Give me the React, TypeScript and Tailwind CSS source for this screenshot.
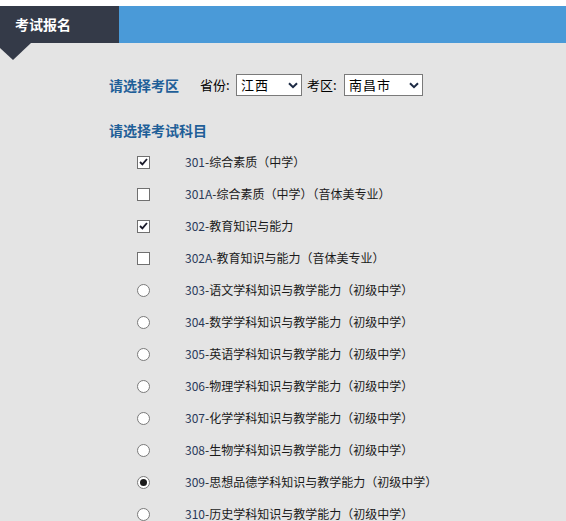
import React from "react"

type Subject = { code: string; name: string; kind: "check" | "radio"; checked?: boolean }

const subjects: Subject[] = [
    { code: "301", name: "综合素质（中学）", kind: "check", checked: true },
    { code: "301A", name: "综合素质（中学）（音体美专业）", kind: "check" },
    { code: "302", name: "教育知识与能力", kind: "check", checked: true },
    { code: "302A", name: "教育知识与能力（音体美专业）", kind: "check" },
    { code: "303", name: "语文学科知识与教学能力（初级中学）", kind: "radio" },
    { code: "304", name: "数学学科知识与教学能力（初级中学）", kind: "radio" },
    { code: "305", name: "英语学科知识与教学能力（初级中学）", kind: "radio" },
    { code: "306", name: "物理学科知识与教学能力（初级中学）", kind: "radio" },
    { code: "307", name: "化学学科知识与教学能力（初级中学）", kind: "radio" },
    { code: "308", name: "生物学科知识与教学能力（初级中学）", kind: "radio" },
    { code: "309", name: "思想品德学科知识与教学能力（初级中学）", kind: "radio", checked: true },
    { code: "310", name: "历史学科知识与教学能力（初级中学）", kind: "radio" },
]

const Chevron = () => (
    <svg width="10" height="7" viewBox="0 0 10 7" className="shrink-0">
        <path d="M1 1.2 L5 5.2 L9 1.2" fill="none" stroke="#1c2a44" strokeWidth="2" />
    </svg>
)

const FakeSelect = ({ value, width }: { value: string; width: string }) => (
    <div className={`flex h-[22px] items-center justify-between border border-[#7a7a7a] bg-white pl-[4px] pr-[3px] text-[13px] text-black ${width}`}>
        <span className="tracking-[1px]">{value}</span>
        <Chevron />
    </div>
)

const Box = ({ checked }: { checked?: boolean }) => (
    <div className="flex h-[13px] w-[13px] items-center justify-center border border-[#707070] bg-white">
        {checked && (
            <svg width="9" height="8" viewBox="0 0 9 8">
                <path d="M1 4 L3.4 6.4 L8 1" fill="none" stroke="#1a1a2a" strokeWidth="1.8" />
            </svg>
        )}
    </div>
)

const Radio = ({ checked }: { checked?: boolean }) => (
    <div className="flex h-[13px] w-[13px] items-center justify-center rounded-full border border-[#7a7a7a] bg-white">
        {checked && <div className="h-[7px] w-[7px] rounded-full bg-[#1a1a1a]" />}
    </div>
)

export default function App() {
    return (
        <div className="h-[521px] w-[566px] overflow-hidden bg-white pt-[6px] font-['Noto_Sans_CJK_SC','Liberation_Sans',sans-serif]">
            <div className="flex h-[37px]">
                <div className="flex w-[119px] items-center bg-[#343a48] pl-[15px] text-[14px] font-bold text-white">
                    考试报名
                </div>
                <div className="flex-1 bg-[#4a9ad8]" />
            </div>
            <div className="relative h-[478px] bg-[#e4e4e4] pl-[109px] pt-[31px]">
                <svg width="32" height="17" viewBox="0 0 32 17" className="absolute left-0 top-0">
                    <polygon points="0,0 31,0 13,17 0,5" fill="#343a48" />
                </svg>
                <div className="flex h-[22px] items-center">
                    <span className="w-[91px] text-[14px] font-bold text-[#1f5f98]">请选择考区</span>
                    <span className="mr-[6px] w-[30px] text-[13px] text-black">省份:</span>
                    <FakeSelect value="江西" width="w-[66px]" />
                    <span className="ml-[5px] mr-[7px] w-[30px] text-[13px] text-black">考区:</span>
                    <FakeSelect value="南昌市" width="w-[79px]" />
                </div>
                <div className="mt-[24px] flex h-[20px] items-center text-[14px] font-bold text-[#1f5f98]">
                    请选择考试科目
                </div>
                <div className="mt-[6px] flex flex-col">
                    {subjects.map((s) => (
                        <div key={s.code} className="flex h-[32px] shrink-0 items-center pl-[28px]">
                            {s.kind === "check" ? <Box checked={s.checked} /> : <Radio checked={s.checked} />}
                            <span className="ml-[35px] text-[12px] text-[#1a1a1a]">
                                <span className="text-[#2a3a5a]">{s.code}</span>-{s.name}
                            </span>
                        </div>
                    ))}
                </div>
            </div>
        </div>
    )
}
